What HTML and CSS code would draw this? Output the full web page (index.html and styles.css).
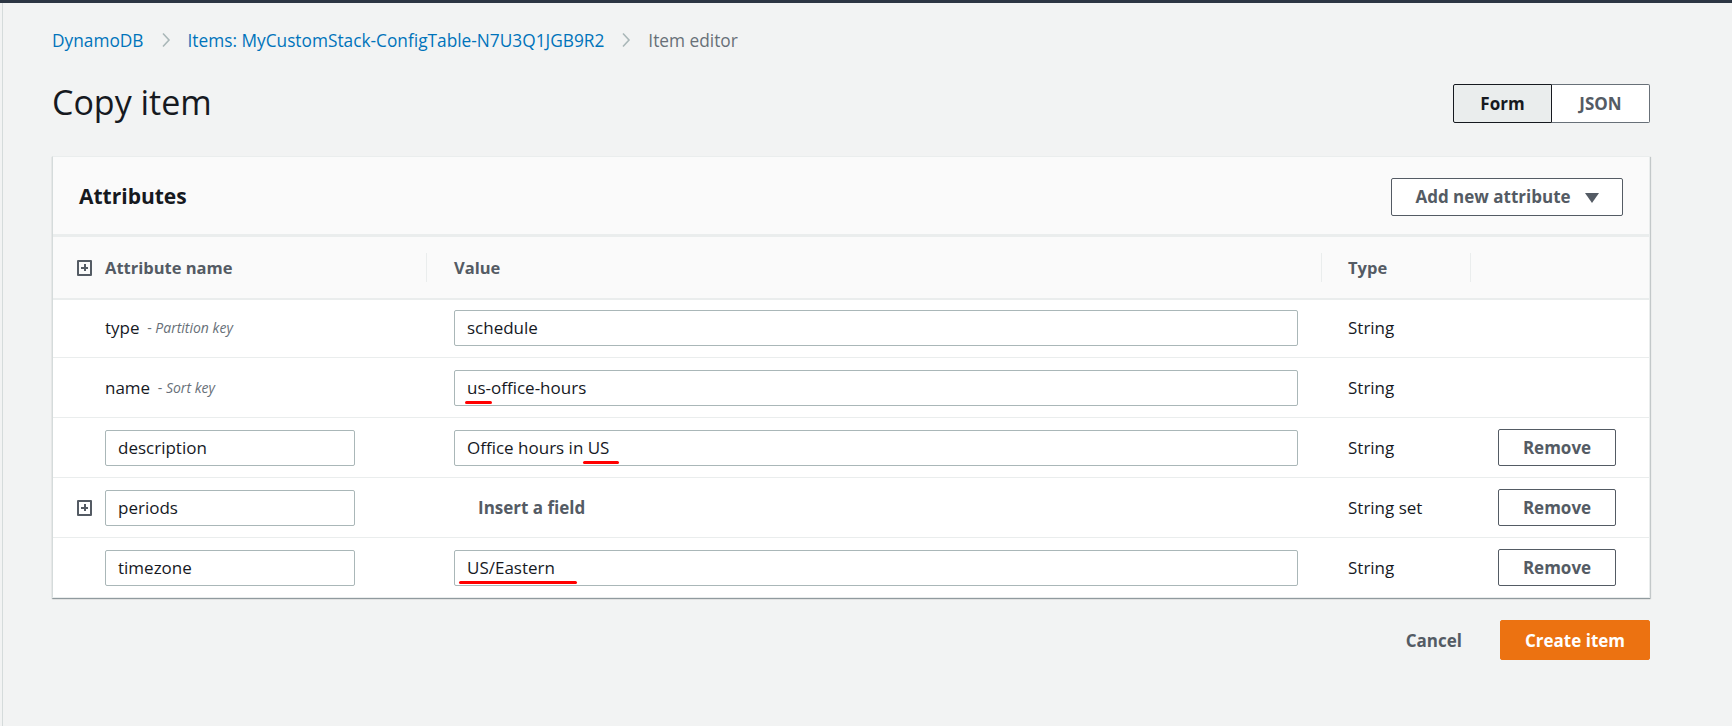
FILE: index.html
```html
<!DOCTYPE html>
<html lang="en">
<head>
<meta charset="utf-8">
<title>Copy item</title>
<link rel="stylesheet" href="styles.css">
</head>
<body>
<div class="topbar"></div>
<div class="page">
  <nav class="crumbs">
    <a class="crumb-link">DynamoDB</a>
    <svg class="chev" viewBox="0 0 10 16" width="10" height="16"><path d="M2 1.5 L8 8 L2 14.5" fill="none" stroke="#aab7b8" stroke-width="1.6"/></svg>
    <a class="crumb-link">Items: MyCustomStack-ConfigTable-N7U3Q1JGB9R2</a>
    <svg class="chev" viewBox="0 0 10 16" width="10" height="16"><path d="M2 1.5 L8 8 L2 14.5" fill="none" stroke="#aab7b8" stroke-width="1.6"/></svg>
    <span class="crumb-current">Item editor</span>
  </nav>

  <div class="title-row">
    <h1 class="title">Copy item</h1>
    <div class="toggle">
      <button class="toggle-btn active">Form</button>
      <button class="toggle-btn">JSON</button>
    </div>
  </div>

  <section class="card">
    <header class="card-head">
      <h2 class="card-title">Attributes</h2>
      <button class="btn add-btn">Add new attribute <span class="caret"></span></button>
    </header>

    <div class="table">
      <div class="cell th c1"><span class="slot"><span class="plusbox"></span></span>Attribute name</div>
      <div class="cell th c2 div">Value</div>
      <div class="cell th c3 div">Type</div>
      <div class="cell th c4 div"></div>

      <div class="cell c1"><span class="slot"></span><span class="key">type</span><span class="keytag"> - <i>Partition key</i></span></div>
      <div class="cell c2"><div class="input wide">schedule</div></div>
      <div class="cell c3">String</div>
      <div class="cell c4"></div>

      <div class="cell c1"><span class="slot"></span><span class="key">name</span><span class="keytag"> - <i>Sort key</i></span></div>
      <div class="cell c2"><div class="input wide"><span class="mark">us</span>-office-hours</div></div>
      <div class="cell c3">String</div>
      <div class="cell c4"></div>

      <div class="cell c1"><span class="slot"></span><div class="input name">description</div></div>
      <div class="cell c2"><div class="input wide">Office hours in<span class="mark mid"> US</span></div></div>
      <div class="cell c3">String</div>
      <div class="cell c4"><button class="btn remove">Remove</button></div>

      <div class="cell c1"><span class="slot"><span class="plusbox"></span></span><div class="input name">periods</div></div>
      <div class="cell c2"><span class="insert">Insert a field</span></div>
      <div class="cell c3">String set</div>
      <div class="cell c4"><button class="btn remove">Remove</button></div>

      <div class="cell c1"><span class="slot"></span><div class="input name">timezone</div></div>
      <div class="cell c2"><div class="input wide"><span class="mark long">US/Eastern</span></div></div>
      <div class="cell c3">String</div>
      <div class="cell c4"><button class="btn remove">Remove</button></div>
    </div>
  </section>

  <footer class="actions">
    <button class="link-btn">Cancel</button>
    <button class="primary">Create item</button>
  </footer>
</div>
</body>
</html>
```

FILE: styles.css
```css
* { box-sizing: border-box; }
html, body { margin: 0; padding: 0; }
body {
  background: #f2f3f3;
  font-family: "Open Sans", "Noto Sans", sans-serif;
  color: #16191f;
  height: 726px;
  overflow: hidden;
}
.topbar { height: 3px; background: #2c3643; }
.page {
  margin-left: 2px;
  border-left: 1px solid #d5dbdb;
  height: 723px;
  padding: 0 82px 0 49px;
}
.crumbs {
  display: flex;
  align-items: center;
  height: 40px;
  padding-top: 17px;
  box-sizing: content-box;
  font-size: 17.3px;
  gap: 17px;
}
.crumb-link { color: #0073bb; }
.crumb-current { color: #687078; }
.chev { display: block; }

.title-row {
  display: flex;
  justify-content: space-between;
  align-items: center;
  margin-top: 22px;
  height: 40px;
}
.title { margin: 0; font-size: 34px; font-weight: 400; line-height: 40px; }
.toggle { display: flex; height: 39px; margin-top: 2px; }
.toggle-btn {
  font-family: inherit;
  font-size: 17px;
  font-weight: 700;
  width: 98px;
  background: #fff;
  color: #545b64;
  border: 1px solid #687078;
  border-left: none;
  border-radius: 0 2px 2px 0;
}
.toggle-btn.active {
  background: #eaeded;
  color: #16191f;
  border: 1px solid #16191f;
  border-radius: 2px 0 0 2px;
  width: 99px;
}

.card {
  margin-top: 34px;
  background: #fff;
  border: 1px solid #eaeded;
  border-left-color: #d5dbdb;
  box-shadow: 0 1px 1px 0 rgba(0,28,36,0.3), 1px 1px 1px 0 rgba(0,28,36,0.15);
}
.card-head {
  display: flex;
  justify-content: space-between;
  align-items: center;
  height: 80px;
  background: #fafafa;
  padding: 0 26px;
  border-bottom: 3px solid #eaeded;
}
.card-title { margin: 0; font-size: 21px; font-weight: 700; }
.btn {
  font-family: inherit;
  font-weight: 700;
  font-size: 17px;
  color: #545b64;
  background: #fff;
  border: 1px solid #545b64;
  border-radius: 2px;
  cursor: pointer;
}
.add-btn {
  height: 38px;
  width: 232px;
  display: flex;
  align-items: center;
  justify-content: center;
  gap: 14px;
  margin-top: 2px;
}
.caret {
  width: 0; height: 0;
  border-left: 7px solid transparent;
  border-right: 7px solid transparent;
  border-top: 10px solid #545b64;
  margin-top: 2px;
}

.table {
  display: grid;
  grid-template-columns: 373px 895px 149px 1fr;
  grid-auto-rows: 60px;
}
.cell {
  display: flex;
  align-items: center;
  border-top: 1px solid #eaeded;
  font-size: 17px;
  color: #16191f;
}
.th {
  background: #fafafa;
  border-top: none;
  border-bottom: 2px solid #eaeded;
  font-weight: 700;
  font-size: 16.5px;
  color: #545b64;
  height: 63px;
  position: relative;
}
.table > .th + .cell:not(.th) { border-top: none; }
.th.div::before {
  content: "";
  position: absolute;
  left: 0; top: 16px; bottom: 16px;
  border-left: 1px solid #eaeded;
}
.c1 { padding-left: 24px; }
.c2 { padding-left: 28px; }
.c3 { padding-left: 27px; }
.c4 { padding-left: 28px; }
.slot { width: 28px; flex: none; display: flex; align-items: center; }
.plusbox {
  width: 15px; height: 16px;
  border: 2px solid #545b64;
  border-radius: 1px;
  position: relative;
}
.plusbox::before, .plusbox::after {
  content: "";
  position: absolute;
  background: #545b64;
}
.plusbox::before { left: 2px; right: 2px; top: 5px; height: 2px; }
.plusbox::after { top: 2px; bottom: 3px; left: 4.5px; width: 2px; }
.key { color: #16191f; }
.keytag { color: #687078; font-size: 14px; margin-left: 4px; white-space: pre; }
.input {
  height: 36px;
  border: 1px solid #aab7b8;
  border-radius: 2px;
  background: #fff;
  display: flex;
  align-items: center;
  padding: 0 12px;
  font-size: 17px;
  color: #16191f;
  white-space: pre;
}
.input.wide { width: 844px; }
.input.name { width: 250px; }
.mark { position: relative; }
.mark::after {
  content: "";
  position: absolute;
  left: -2px; right: -6px; bottom: -5px;
  height: 3px;
  border-radius: 2px;
  background: #ff0000;
}
.mark.mid::after { left: 0; right: -10px; }
.mark.long::after { left: -8px; right: -22px; }
.insert { font-weight: 700; color: #545b64; margin-left: 24px; }
.remove { width: 118px; height: 37px; }

.actions {
  display: flex;
  justify-content: flex-end;
  align-items: center;
  margin-top: 22px;
  gap: 38px;
}
.link-btn {
  font-family: inherit;
  font-size: 17px;
  font-weight: 700;
  color: #545b64;
  background: none;
  border: none;
  padding: 0;
}
.primary {
  font-family: inherit;
  font-size: 17px;
  font-weight: 700;
  color: #fff;
  background: #ec7211;
  border: 1px solid #ec7211;
  border-radius: 2px;
  width: 150px;
  height: 40px;
}
```
